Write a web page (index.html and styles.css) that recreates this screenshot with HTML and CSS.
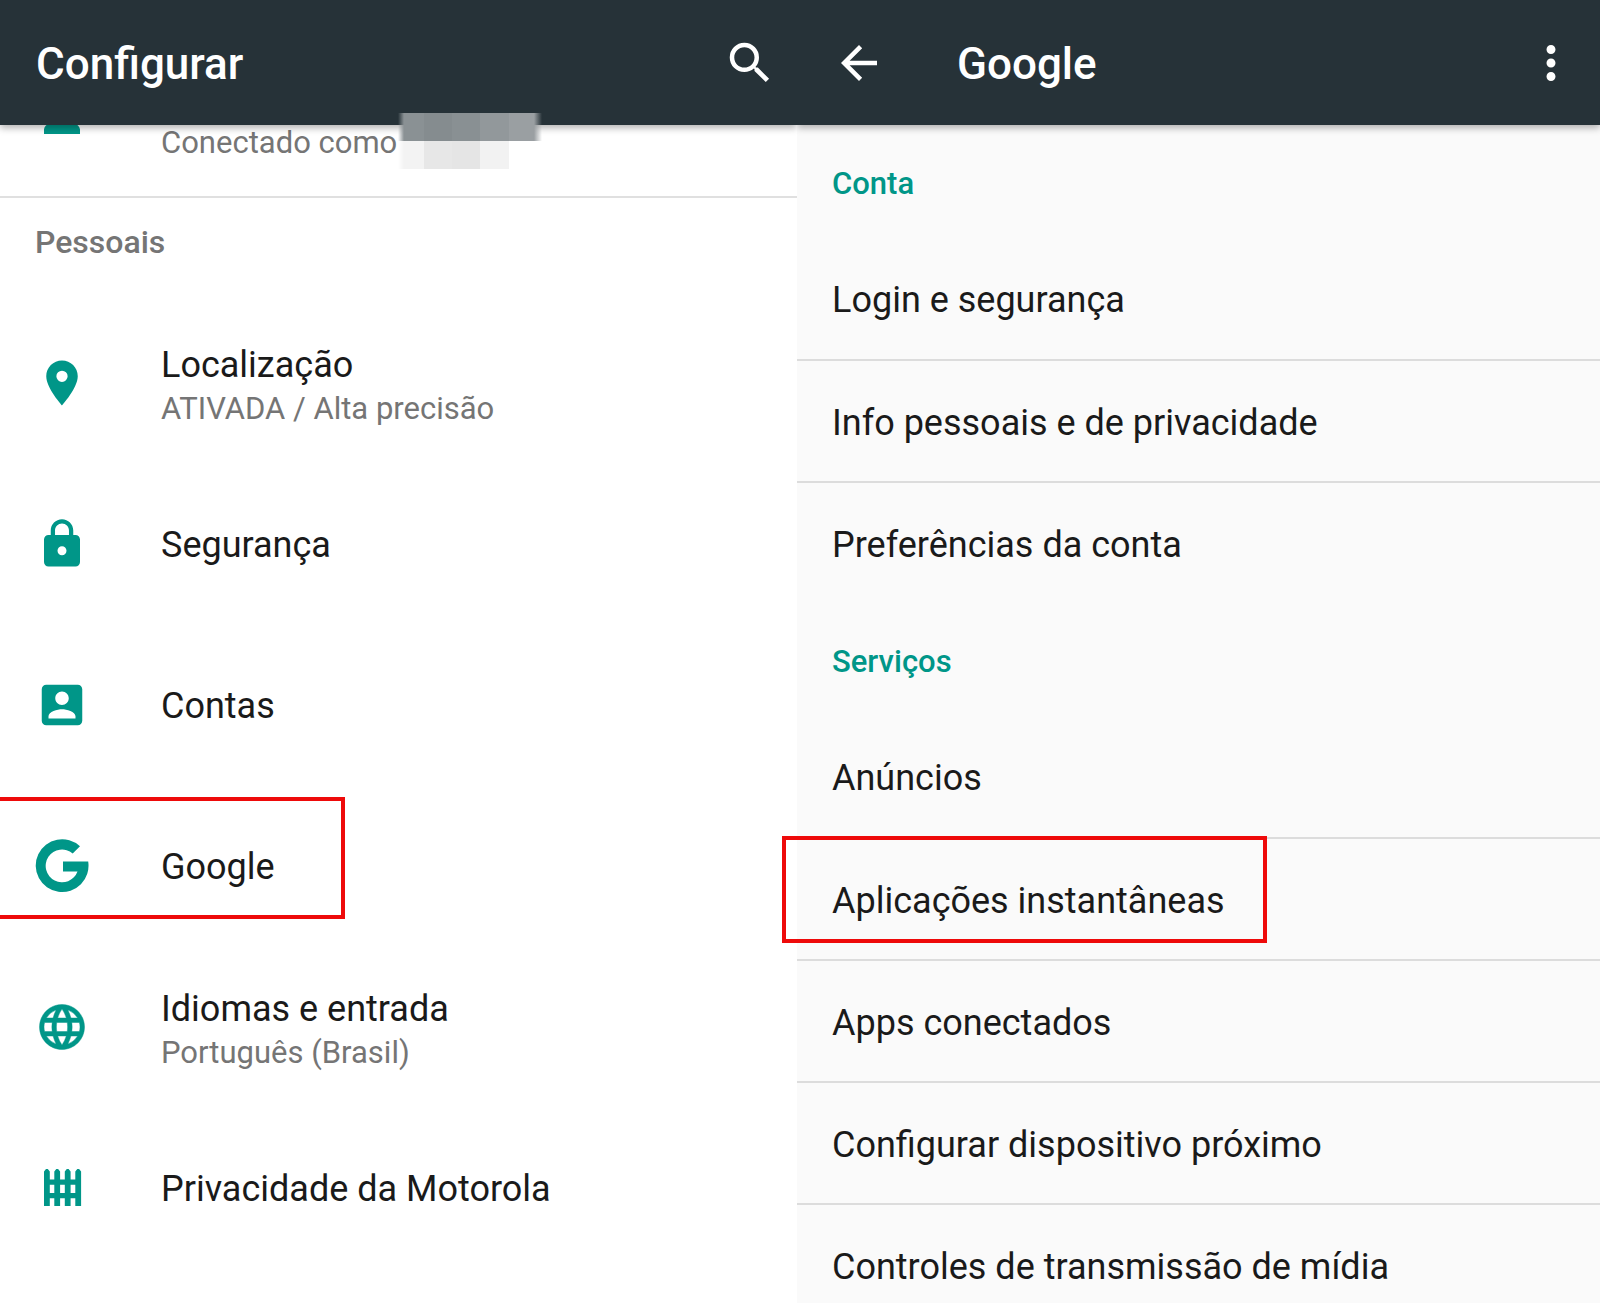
FILE: index.html
```html
<!DOCTYPE html>
<html lang="pt-BR">
<head>
<meta charset="utf-8">
<meta name="viewport" content="width=device-width, initial-scale=1">
<title>Configurar</title>
<link rel="stylesheet" href="styles.css">
</head>
<body>
<main class="screens">
  <section class="screen screen-settings">
    <header class="bar">
      <h1 class="bar-title">Configurar</h1>
      <button class="bar-button" type="button" aria-label="Pesquisar">
        <svg class="icon" viewBox="0 0 24 24"><path d="M15.5 14h-.79l-.28-.27A6.471 6.471 0 0 0 16 9.5 6.5 6.5 0 1 0 9.5 16c1.61 0 3.09-.59 4.23-1.57l.27.28v.79l5 4.99L20.49 19l-4.99-5zm-6 0C7.01 14 5 11.99 5 9.5S7.01 5 9.5 5 14 7.01 14 9.5 11.99 14 9.5 14z"/></svg>
      </button>
    </header>
    <div class="redaction" aria-hidden="true">
      <div class="redaction-dark"></div>
      <div class="redaction-light"></div>
    </div>
    <a class="account" href="#">
      <svg class="icon account-icon" viewBox="0 0 24 24"><path d="M12 12c2.21 0 4-1.79 4-4s-1.79-4-4-4-4 1.79-4 4 1.79 4 4 4zm0 2c-2.67 0-8 1.34-8 4v2h16v-2c0-2.66-5.33-4-8-4z"/></svg>
      <span class="sub">Conectado como</span>
    </a>
    <h2 class="group">Pessoais</h2>
    <ul class="list">
      <li><a class="item" href="#">
        <svg class="icon" viewBox="0 0 24 24"><path d="M12 2C8.13 2 5 5.13 5 9c0 5.25 7 13 7 13s7-7.75 7-13c0-3.87-3.13-7-7-7zm0 9.500a2.500 2.500 0 0 1 0-5 2.500 2.500 0 0 1 0 5z"/></svg>
        <span class="text"><span class="name">Localização</span><span class="sub">ATIVADA / Alta precisão</span></span>
      </a></li>
      <li><a class="item" href="#">
        <svg class="icon" viewBox="0 0 24 24"><path d="M18 8h-1V6c0-2.760-2.240-5-5-5S7 3.240 7 6v2H6c-1.100 0-2 .9-2 2v10c0 1.100.9 2 2 2h12c1.100 0 2-.9 2-2V10c0-1.100-.9-2-2-2zm-6 9c-1.100 0-2-.9-2-2s.9-2 2-2 2 .9 2 2-.9 2-2 2zm3.100-9H8.900V6c0-1.710 1.390-3.100 3.100-3.100s3.100 1.390 3.100 3.100v2z"/></svg>
        <span class="text"><span class="name">Segurança</span></span>
      </a></li>
      <li><a class="item" href="#">
        <svg class="icon" viewBox="0 0 24 24"><path d="M3 5v14a2 2 0 0 0 2 2h14c1.100 0 2-.9 2-2V5c0-1.100-.9-2-2-2H5a2 2 0 0 0-2 2zm12 4c0 1.660-1.340 3-3 3s-3-1.340-3-3 1.340-3 3-3 3 1.340 3 3zm-9 8c0-2 4-3.100 6-3.100s6 1.100 6 3.100v1H6v-1z"/></svg>
        <span class="text"><span class="name">Contas</span></span>
      </a></li>
      <li><a class="item item-google" href="#">
        <svg class="icon" viewBox="0 0 54 54"><path d="M45 7.200L37.700 14.400A16.400 16.400 0 1 0 42.500 32.500H28V22.500H53.200A26.400 26.400 0 1 1 45 7.200Z"/></svg>
        <span class="text"><span class="name">Google</span></span>
      </a></li>
      <li><a class="item" href="#">
        <svg class="icon icon-globe" viewBox="0 0 24 24"><path d="M11.990 2C6.470 2 2 6.480 2 12s4.470 10 9.990 10C17.520 22 22 17.520 22 12S17.520 2 11.990 2zm6.930 6h-2.950a15.650 15.650 0 0 0-1.380-3.560A8.030 8.030 0 0 1 18.920 8zM12 4.040c.83 1.200 1.480 2.530 1.910 3.960h-3.820c.43-1.430 1.080-2.760 1.910-3.960zM4.260 14C4.100 13.360 4 12.690 4 12s.1-1.360.26-2h3.380c-.08.66-.14 1.320-.14 2 0 .68.06 1.340.14 2H4.260zm.82 2h2.950c.32 1.250.78 2.450 1.380 3.560A7.987 7.987 0 0 1 5.080 16zm2.950-8H5.080a7.987 7.987 0 0 1 4.330-3.560A15.650 15.650 0 0 0 8.030 8zM12 19.960c-.83-1.200-1.480-2.530-1.910-3.960h3.820c-.43 1.430-1.080 2.760-1.910 3.960zM14.340 14H9.660c-.09-.66-.16-1.320-.16-2 0-.68.07-1.350.16-2h4.680c.09.65.16 1.320.16 2 0 .68-.07 1.340-.16 2zm.25 5.560c.6-1.110 1.060-2.310 1.380-3.560h2.950a8.030 8.030 0 0 1-4.330 3.560zM16.360 14c.08-.66.14-1.320.14-2 0-.68-.06-1.340-.14-2h3.380c.16.64.26 1.310.26 2s-.1 1.360-.26 2h-3.380z"/></svg>
        <span class="text"><span class="name">Idiomas e entrada</span><span class="sub">Português (Brasil)</span></span>
      </a></li>
      <li><a class="item" href="#">
        <svg class="icon" viewBox="0 0 54 54"><path d="M9 45V10.500l2-2.500h1.800l2 2.500V45zM19.300 45V10.500l2-2.500h1.800l2 2.500V45zM29.800 45V10.500l2-2.500h1.800l2 2.500V45zM40.300 45V10.500l2-2.500h1.800l2 2.500V45z"/><path d="M9 18.500h37v5.300H9zM9 32h37v5.300H9z"/></svg>
        <span class="text"><span class="name">Privacidade da Motorola</span></span>
      </a></li>
    </ul>
  </section>

  <section class="screen screen-google">
    <header class="bar">
      <button class="bar-button bar-back" type="button" aria-label="Voltar">
        <svg class="icon" viewBox="0 0 24 24"><path d="M20 11H7.830l5.590-5.590L12 4l-8 8 8 8 1.410-1.410L7.830 13H20v-2z"/></svg>
      </button>
      <h1 class="bar-title">Google</h1>
      <button class="bar-button" type="button" aria-label="Mais opções">
        <svg class="icon" viewBox="0 0 24 24"><path d="M12 8c1.100 0 2-.9 2-2s-.9-2-2-2-2 .9-2 2 .9 2 2 2zm0 2c-1.100 0-2 .9-2 2s.9 2 2 2 2-.9 2-2-.9-2-2-2zm0 6c-1.100 0-2 .9-2 2s.9 2 2 2 2-.9 2-2-.9-2-2-2z"/></svg>
      </button>
    </header>
    <h2 class="category">Conta</h2>
    <ul class="list lined">
      <li><a class="link" href="#">Login e segurança</a></li>
      <li><a class="link" href="#">Info pessoais e de privacidade</a></li>
      <li><a class="link" href="#">Preferências da conta</a></li>
    </ul>
    <h2 class="category">Serviços</h2>
    <ul class="list lined">
      <li><a class="link" href="#">Anúncios</a></li>
      <li><a class="link link-instant" href="#">Aplicações instantâneas</a></li>
      <li><a class="link" href="#">Apps conectados</a></li>
      <li><a class="link" href="#">Configurar dispositivo próximo</a></li>
      <li><a class="link" href="#">Controles de transmissão de mídia</a></li>
    </ul>
  </section>
</main>
</body>
</html>
```

FILE: styles.css
```css
*,
*::after {
  box-sizing: border-box;
}

body {
  margin: 0;
  font-family: Roboto, "Liberation Sans", sans-serif;
  font-size: 36px;
  line-height: 42px;
  color: #1a1a1a;
  background: #fff;
}

h1,
h2 {
  margin: 0;
  font-weight: 500;
}

a {
  color: inherit;
  text-decoration: none;
}

.screens {
  display: grid;
  grid-template-columns: 797fr 803fr;
  height: 100vh;
  overflow: hidden;
}

.screen {
  position: relative;
  min-width: 0;
}

.screen-google {
  background: #fafafa;
}

.icon {
  display: block;
  flex: none;
  width: 54px;
  height: 54px;
  fill: currentColor;
}

.icon-globe {
  stroke: currentColor;
  stroke-width: 0.2;
}

/* App bar */
.bar {
  position: relative;
  z-index: 1;
  display: flex;
  align-items: center;
  height: 125px;
  padding: 0 20px 0 36px;
  color: #fff;
  background: #263238;
  box-shadow: 0 3px 7px rgba(0, 0, 0, 0.3);
  clip-path: inset(0 0 -16px 0);
}

.screen-google .bar {
  padding: 0 22px 0 35px;
}

.bar-title {
  flex: 1;
  padding-top: 3px;
  font-size: 44px;
  line-height: 54px;
}

.bar-button {
  padding: 0;
  border: 0;
  color: inherit;
  background: none;
}

.bar-back {
  margin-right: 71px;
}

/* Pixelated patch that hides the account name */
.redaction {
  position: absolute;
  z-index: 2;
  top: 113px;
  left: 398px;
  width: 144px;
}

.redaction-dark {
  height: 28px;
  background: linear-gradient(90deg, #8a919400 0, #8a9194 6px, #8a9194 26px, #858c8f 26px, #858c8f 54px, #899093 54px, #899093 82px, #92989b 82px, #92989b 111px, #9a9fa2 111px, #9a9fa2 136px, #9a9fa200 144px);
}

.redaction-light {
  height: 28px;
  background: linear-gradient(90deg, #f3f3f300 0, #f3f3f3 6px, #f3f3f3 26px, #e7e7e7 26px, #e7e7e7 54px, #e5e5e5 54px, #e5e5e5 82px, #f2f2f2 82px, #f2f2f2 111px, #fff0 111px);
}

/* Settings list */
.account {
  display: flex;
  align-items: flex-end;
  gap: 72px;
  height: 73px;
  padding: 0 35px 34px;
  border-bottom: 2px solid #e0e0e0;
}

.account-icon {
  margin-bottom: 19px;
  color: #009688;
}

.group {
  padding: 23px 35px 39px;
  font-size: 32px;
  color: #757575;
}

.list {
  margin: 0;
  padding: 0;
  list-style: none;
}

.item {
  position: relative;
  display: flex;
  align-items: center;
  gap: 72px;
  height: 161px;
  padding: 0 35px;
}

.item .icon {
  color: #009688;
}

.text {
  display: flex;
  flex-direction: column;
  padding-top: 2px;
}

.name {
  line-height: 50px;
}

.sub {
  font-size: 31px;
  line-height: 38px;
  color: #757575;
}

/* Account screen */
.category {
  padding: 38px 35px 32px;
  font-size: 31px;
  color: #009688;
}

.link {
  position: relative;
  display: flex;
  align-items: center;
  height: 122px;
  padding: 3px 35px 0;
}

.lined li + li .link {
  border-top: 2px solid #dcdcdc;
}

/* Highlight frames */
.item-google::after,
.link-instant::after {
  content: "";
  position: absolute;
  border: 4px solid #ee0a0a;
}

.item-google::after {
  top: 12px;
  left: 0;
  width: 345px;
  height: 122px;
  border-left: 0;
}

.link-instant::after {
  top: -3px;
  left: -15px;
  width: 485px;
  height: 107px;
}
```
